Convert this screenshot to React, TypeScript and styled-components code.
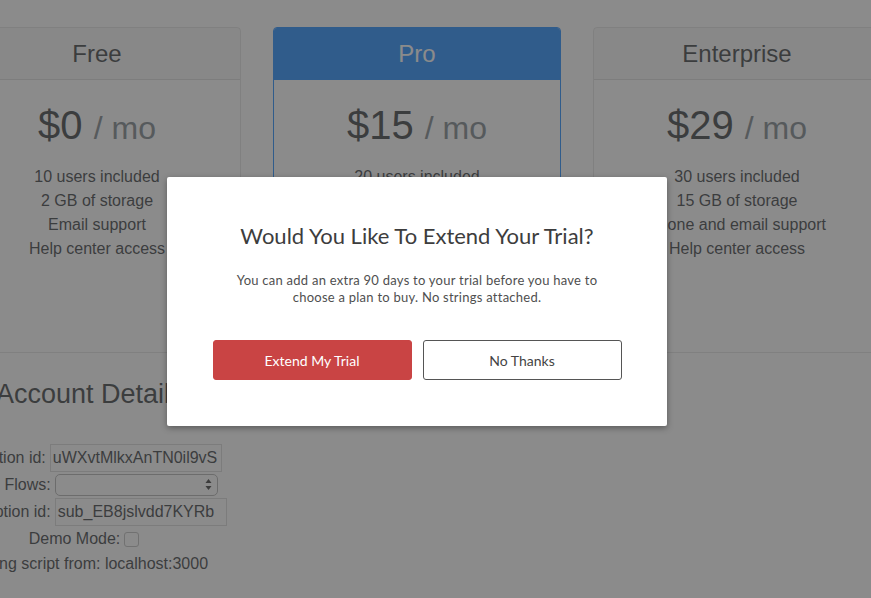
import styled, { createGlobalStyle, css } from 'styled-components';

const GlobalStyle = createGlobalStyle`
  html, body {
    margin: 0;
    padding: 0;
    background: #fff;
    overflow: hidden;
  }
  body {
    font-family: "Liberation Sans", Arial, Helvetica, sans-serif;
    color: #212529;
  }
`;

const Page = styled.div`
  position: relative;
  width: 871px;
  height: 598px;
  padding-top: 27px;
  box-sizing: border-box;
  overflow: hidden;
`;

const PlanRow = styled.div`
  display: flex;
  gap: 32px;
  margin-left: -47px;
`;

const Card = styled.div<{ $primary?: boolean }>`
  flex: none;
  width: 288px;
  height: 326px;
  box-sizing: border-box;
  border: 1px solid rgba(0, 0, 0, 0.125);
  border-radius: 4px;
  overflow: hidden;
  ${(p) =>
    p.$primary &&
    css`
      border-color: #007bff;
    `}
`;

const CardHeader = styled.div<{ $primary?: boolean }>`
  padding: 12px 20px 11px;
  background: rgba(0, 0, 0, 0.03);
  border-bottom: 1px solid rgba(0, 0, 0, 0.125);
  text-align: center;
  font-size: 24px;
  line-height: 28px;
  ${(p) =>
    p.$primary &&
    css`
      background: #007bff;
      border-bottom-color: #007bff;
      color: #fff;
    `}
`;

const CardBody = styled.div`
  padding: 21px 20px 20px;
  text-align: center;
`;

const Price = styled.div`
  font-size: 40px;
  line-height: 48px;
  margin-bottom: 13px;
`;

const Per = styled.small`
  font-size: 32px;
  color: #6c757d;
`;

const Features = styled.ul`
  list-style: none;
  margin: 0;
  padding: 0;
  font-size: 16px;
  line-height: 24px;
`;

const AccountSection = styled.div`
  width: 400px;
  margin-left: -116px;
  padding-top: 24px;
  text-align: center;
  font-size: 16px;
`;

const AccountHeading = styled.h2`
  margin: 0 0 33px 112px;
  text-align: left;
  font-size: 27px;
  font-weight: 400;
  line-height: 34px;
  white-space: nowrap;
`;

const FormRow = styled.div<{ $h: number }>`
  height: ${(p) => p.$h}px;
  display: flex;
  align-items: center;
  justify-content: center;
  gap: 4px;
  white-space: nowrap;
`;

const TextBox = styled.div`
  flex: none;
  width: 172px;
  height: 28px;
  box-sizing: border-box;
  border: 1px solid #d4d4d4;
  padding: 0 2px;
  font-size: 16px;
  line-height: 26px;
  text-align: left;
  overflow: hidden;
`;

const SelectBox = styled.div`
  flex: none;
  width: 163px;
  height: 22px;
  box-sizing: border-box;
  border: 1px solid #a9a9a9;
  border-radius: 5px;
  background: #fff;
  display: flex;
  align-items: center;
  justify-content: flex-end;
  padding-right: 5px;
`;

const CheckBox = styled.span`
  flex: none;
  width: 13px;
  height: 13px;
  border: 1px solid #b5b5b5;
  border-radius: 3px;
  background: #fff;
`;

const Overlay = styled.div`
  position: absolute;
  inset: 0;
  background: rgba(75, 75, 75, 0.644);
`;

const Modal = styled.div`
  position: absolute;
  left: 167px;
  top: 177px;
  width: 500px;
  height: 249px;
  box-sizing: border-box;
  background: #fff;
  border-radius: 2px;
  box-shadow: 0 2px 6px rgba(0, 0, 0, 0.35);
  padding-top: 44px;
  font-family: Lato, "Open Sans", sans-serif;
  text-align: center;
`;

const ModalTitle = styled.h3`
  margin: 0;
  font-size: 22px;
  font-weight: 400;
  line-height: 30px;
  color: #3d3d3d;
`;

const ModalText = styled.p`
  margin: 21px auto 0;
  width: 380px;
  font-size: 13px;
  line-height: 17px;
  letter-spacing: 0.25px;
  color: #4f4f4f;
`;

const ButtonRow = styled.div`
  display: flex;
  justify-content: center;
  gap: 11px;
  margin-top: 34px;
`;

const Button = styled.button<{ $primary?: boolean }>`
  width: 199px;
  height: 40px;
  border-radius: 3px;
  font-family: Lato, "Open Sans", sans-serif;
  font-size: 14px;
  cursor: pointer;
  ${(p) =>
    p.$primary
      ? css`
          background: #c94444;
          border: 1px solid #c94444;
          color: #fff;
        `
      : css`
          background: #fff;
          border: 1px solid #555;
          color: #444;
        `}
`;

const plans = [
  {
    name: 'Free',
    price: '$0',
    features: ['10 users included', '2 GB of storage', 'Email support', 'Help center access'],
  },
  {
    name: 'Pro',
    price: '$15',
    primary: true,
    features: ['20 users included', '10 GB of storage', 'Priority email support', 'Help center access'],
  },
  {
    name: 'Enterprise',
    price: '$29',
    features: ['30 users included', '15 GB of storage', 'Phone and email support', 'Help center access'],
  },
];

function SelectArrows() {
  return (
    <svg width="7" height="13" viewBox="0 0 7 13">
      <path d="M3.5 1 L6.5 5 H0.5 Z" fill="#222" />
      <path d="M3.5 12 L6.5 8 H0.5 Z" fill="#222" />
    </svg>
  );
}

export default function App() {
  return (
    <>
      <GlobalStyle />
      <Page>
        <PlanRow>
          {plans.map((plan) => (
            <Card key={plan.name} $primary={plan.primary}>
              <CardHeader $primary={plan.primary}>{plan.name}</CardHeader>
              <CardBody>
                <Price>
                  {plan.price} <Per>/ mo</Per>
                </Price>
                <Features>
                  {plan.features.map((f) => (
                    <li key={f}>{f}</li>
                  ))}
                </Features>
              </CardBody>
            </Card>
          ))}
        </PlanRow>

        <AccountSection>
          <AccountHeading>Account Details</AccountHeading>
          <FormRow $h={28}>
            Application id: <TextBox>uWXvtMlkxAnTN0il9vS</TextBox>
          </FormRow>
          <FormRow $h={25}>
            Cancel Flows:
            <SelectBox>
              <SelectArrows />
            </SelectBox>
          </FormRow>
          <FormRow $h={29}>
            Subscription id: <TextBox>sub_EB8jslvdd7KYRb</TextBox>
          </FormRow>
          <FormRow $h={26}>
            Demo Mode: <CheckBox />
          </FormRow>
          <FormRow $h={24}>Loading script from: localhost:3000</FormRow>
        </AccountSection>

        <Overlay />
        <Modal>
          <ModalTitle>Would You Like To Extend Your Trial?</ModalTitle>
          <ModalText>
            You can add an extra 90 days to your trial before you have to choose a plan to buy. No
            strings attached.
          </ModalText>
          <ButtonRow>
            <Button $primary>Extend My Trial</Button>
            <Button>No Thanks</Button>
          </ButtonRow>
        </Modal>
      </Page>
    </>
  );
}
